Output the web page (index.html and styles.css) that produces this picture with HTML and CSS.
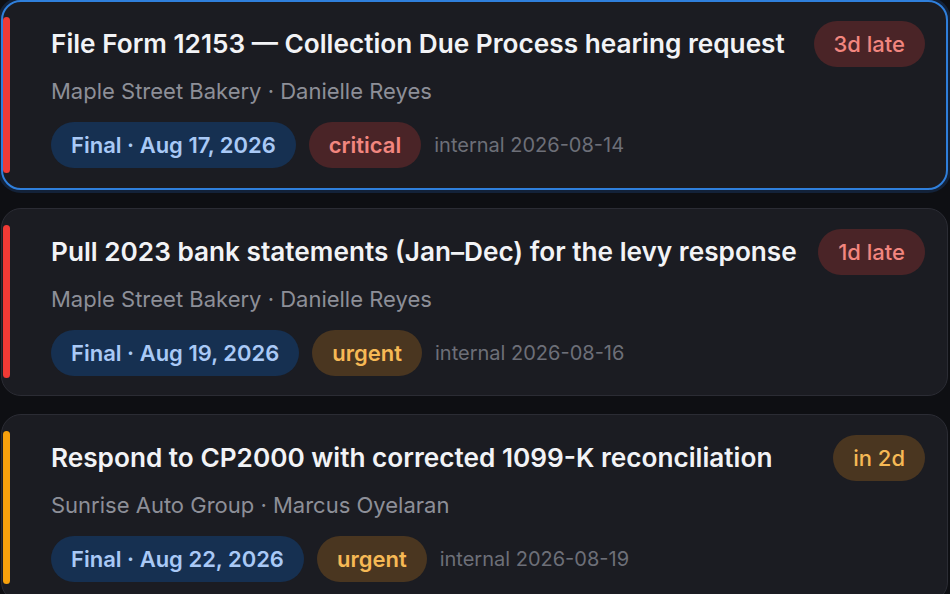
FILE: index.html
```html
<!DOCTYPE html>
<html lang="en">
<head>
<meta charset="utf-8">
<title>Deadlines</title>
<link rel="stylesheet" href="styles.css">
</head>
<body>
<div class="list">
  <div class="card selected">
    <div class="stripe red"></div>
    <div class="body">
      <div class="head">
        <div class="title">File Form 12153 — Collection Due Process hearing request</div>
        <span class="badge late">3d late</span>
      </div>
      <div class="sub">Maple Street Bakery · Danielle Reyes</div>
      <div class="meta">
        <span class="pill final">Final · Aug 17, 2026</span>
        <span class="pill critical">critical</span>
        <span class="internal">internal 2026-08-14</span>
      </div>
    </div>
  </div>
  <div class="card">
    <div class="stripe red"></div>
    <div class="body">
      <div class="head">
        <div class="title">Pull 2023 bank statements (Jan–Dec) for the levy response</div>
        <span class="badge late">1d late</span>
      </div>
      <div class="sub">Maple Street Bakery · Danielle Reyes</div>
      <div class="meta">
        <span class="pill final">Final · Aug 19, 2026</span>
        <span class="pill urgent">urgent</span>
        <span class="internal">internal 2026-08-16</span>
      </div>
    </div>
  </div>
  <div class="card">
    <div class="stripe orange"></div>
    <div class="body">
      <div class="head">
        <div class="title">Respond to CP2000 with corrected 1099-K reconciliation</div>
        <span class="badge soon">in 2d</span>
      </div>
      <div class="sub">Sunrise Auto Group · Marcus Oyelaran</div>
      <div class="meta">
        <span class="pill final">Final · Aug 22, 2026</span>
        <span class="pill urgent">urgent</span>
        <span class="internal">internal 2026-08-19</span>
      </div>
    </div>
  </div>
</div>
</body>
</html>
```

FILE: styles.css
```css
* { box-sizing: border-box; }
html, body {
  margin: 0;
  padding: 0;
  background: #0e0f13;
  font-family: Inter, "Noto Sans", "Liberation Sans", sans-serif;
  overflow: hidden;
}
.list {
  display: flex;
  flex-direction: column;
  gap: 18px;
  padding: 0 2px 0 1px;
}
.card {
  display: flex;
  background: #1b1c22;
  border: 1px solid #2b2c34;
  border-radius: 20px;
}
.card.selected {
  border: 2px solid #2f7fdc;
  box-shadow: 0 0 0 3px rgba(28, 72, 130, 0.35);
}
.stripe {
  flex: 0 0 7px;
  margin: 16px 0 17px 1px;
  border-radius: 4px;
}
.selected .stripe { margin: 15px 0; }
.stripe.red { background: #f03a35; }
.stripe.orange { background: #f6a00c; }
.body {
  flex: 1;
  min-width: 0;
  padding: 20px 22px 19px 41px;
  display: flex;
  flex-direction: column;
}
.selected .body { padding: 19px 21px 20px 41px; }
.head {
  display: flex;
  align-items: center;
  gap: 20px;
}
.title {
  flex: 1;
  color: #f2f3f6;
  font-size: 26.2px;
  font-weight: 600;
  line-height: 30px;
  white-space: nowrap;
}
.badge {
  flex: none;
  font-size: 22px;
  font-weight: 500;
  line-height: 26px;
  padding: 10px 20px;
  border-radius: 23px;
}
.badge.late { background: #4a2427; color: #f2867f; }
.badge.soon { background: #4a3620; color: #f6b955; }
.sub {
  margin-top: 10px;
  color: #8d8f98;
  font-size: 22px;
  line-height: 28px;
}
.meta {
  margin-top: 17px;
  display: flex;
  align-items: center;
  gap: 13px;
}
.pill {
  font-size: 22px;
  font-weight: 600;
  line-height: 26px;
  padding: 10px 20px;
  border-radius: 23px;
}
.pill.final { background: #163051; color: #a9c9f6; }
.pill.critical { background: #4a2427; color: #f2867f; }
.pill.urgent { background: #4a3620; color: #f6b955; }
.internal {
  color: #6d6f78;
  font-size: 20px;
  line-height: 26px;
}
```
